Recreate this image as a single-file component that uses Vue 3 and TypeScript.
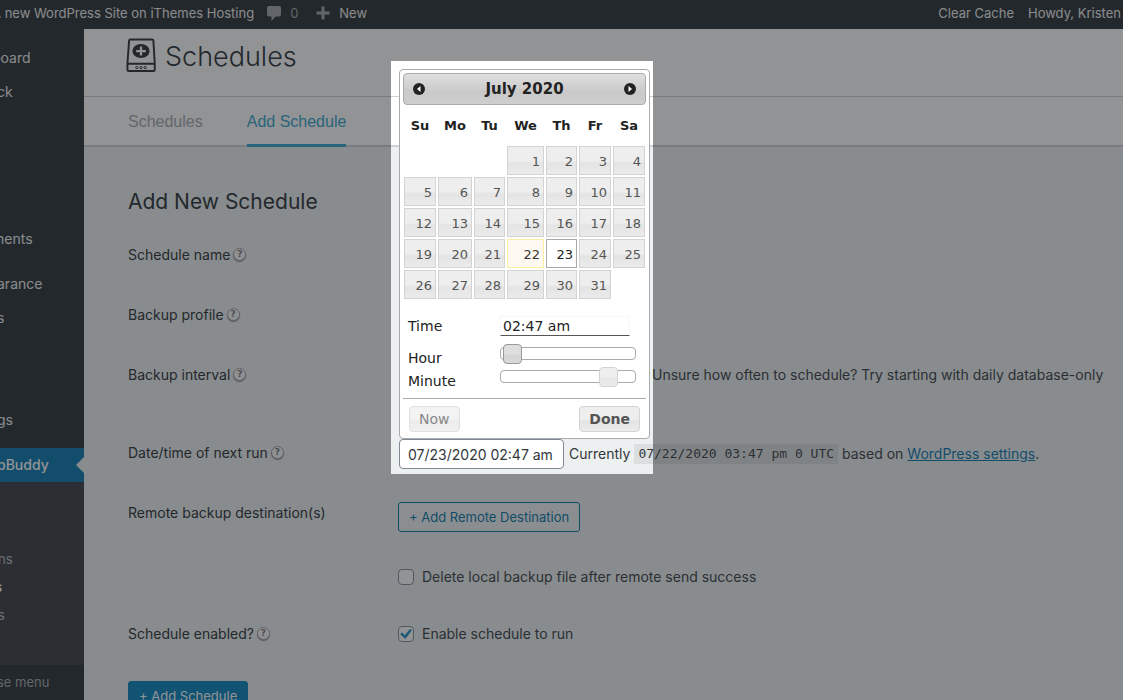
<script setup lang="ts">
import { ref } from 'vue'

interface MenuItem {
  label: string
  size: string
}

const menu: MenuItem[] = [
  { label: 'board', size: 'first clipped' },
  { label: 'ck', size: 'regular' },
  { label: 'ments', size: 'spaced clipped' },
  { label: 'arance', size: 'group' },
  { label: 's', size: 'regular' },
  { label: 'gs', size: 'last' },
]
const submenu = ['ns', 's', 's']
const dayNames = ['Su', 'Mo', 'Tu', 'We', 'Th', 'Fr', 'Sa']

const firstWeekday = 3
const daysInMonth = 31
const weeks: number[][] = []
for (let start = 1 - firstWeekday; start <= daysInMonth; start += 7) {
  weeks.push(Array.from({ length: 7 }, (_, i) => start + i))
}

const today = 22
const selected = ref(23)
const time = ref('02:47 am')
const hour = ref(2)
const minute = ref(47)
const nextRun = ref('07/23/2020 02:47 am')
const deleteLocal = ref(false)
const enabled = ref(true)
</script>

<template>
  <div class="page">
    <header class="adminbar">
      <a href="#" class="site">A new WordPress Site on iThemes Hosting</a>
      <a href="#" class="comments">
        <svg width="14" height="15" viewBox="0 0 14 15"><path d="M2 0h10a2 2 0 0 1 2 2v6.500a2 2 0 0 1-2 2H8.500L4.500 15v-4.500H2a2 2 0 0 1-2-2V2a2 2 0 0 1 2-2z" /></svg>
        <span>0</span>
      </a>
      <a href="#" class="new">
        <svg width="14" height="14" viewBox="0 0 14 14"><path d="M5.500 0.500h3v5h5v3h-5v5h-3v-5h-5v-3h5z" /></svg>
        <span>New</span>
      </a>
      <a href="#" class="cache">Clear Cache</a>
      <a href="#" class="howdy">Howdy, Kristen</a>
    </header>

    <div class="body">
      <nav class="sidebar">
        <a v-for="(item, i) in menu" :key="i" href="#" class="item" :class="item.size">{{ item.label }}</a>
        <a href="#" class="item current">pBuddy</a>
        <div class="submenu">
          <a v-for="(label, i) in submenu" :key="i" href="#" :class="{ here: i === 1 }">{{ label }}</a>
        </div>
        <button type="button" class="collapse">se menu</button>
      </nav>

      <main class="main">
        <div class="titlebar">
          <svg width="30" height="35" viewBox="0 0 31 36" fill="none">
            <path d="M4.500 1.500h22.500q1.200 0 1.300 1.200L29.700 26v6.500q0 1.600-1.600 1.600H3.100q-1.600 0-1.600-1.600V26L3.200 2.700q.1-1.200 1.300-1.200zM1.500 26.500h28.200" stroke="#23282d" stroke-width="2" />
            <ellipse cx="15.500" cy="13.400" rx="8.900" ry="7.300" fill="#23282d" />
            <path d="M15.500 8.800v9.200M10.500 13.400h10" stroke="#fff" stroke-width="2.400" />
            <g stroke="#23282d" stroke-width="1">
              <circle cx="11.200" cy="30.500" r="1.200" /><circle cx="15.500" cy="30.500" r="1.200" /><circle cx="19.800" cy="30.500" r="1.200" />
            </g>
          </svg>
          <h1>Schedules</h1>
        </div>
        <nav class="tabs">
          <a href="#">Schedules</a>
          <a href="#" class="active">Add Schedule</a>
        </nav>

        <form class="form" @submit.prevent>
          <h2>Add New Schedule</h2>
          <div class="row">
            <div class="label">Schedule name <span class="tip">?</span></div>
          </div>
          <div class="row">
            <div class="label">Backup profile <span class="tip">?</span></div>
          </div>
          <div class="row tall">
            <div class="label">Backup interval <span class="tip">?</span></div>
            <div class="hint">Unsure how often to schedule? Try starting with daily database-only</div>
          </div>
          <div class="row date">
            <label class="label" for="next-run">Date/time of next run <span class="tip">?</span></label>
            <div class="field">
              <input id="next-run" v-model="nextRun" type="text" class="next-run">
              <span class="currently">Currently</span>
              <code>07/22/2020 03:47 pm 0 UTC</code>
              <span>based on <a href="#">WordPress settings</a>.</span>

              <div class="spotlight">
                <section class="picker">
                  <div class="month">
                    <button type="button" aria-label="Prev">
                      <svg width="12" height="12" viewBox="0 0 12 12"><circle cx="6" cy="6" r="6" fill="#222" /><path d="M7.500 3v6L4 6z" fill="#fff" /></svg>
                    </button>
                    <strong>July 2020</strong>
                    <button type="button" aria-label="Next">
                      <svg width="12" height="12" viewBox="0 0 12 12"><circle cx="6" cy="6" r="6" fill="#222" /><path d="M4.500 3v6L8 6z" fill="#fff" /></svg>
                    </button>
                  </div>
                  <table>
                    <colgroup>
                      <col class="c34"><col class="c36"><col class="c33"><col class="c39"><col class="c33"><col class="c34"><col class="c34">
                    </colgroup>
                    <thead>
                      <tr><th v-for="d in dayNames" :key="d" scope="col">{{ d }}</th></tr>
                    </thead>
                    <tbody>
                      <tr v-for="(week, w) in weeks" :key="w">
                        <td v-for="d in week" :key="d">
                          <button
                            v-if="d > 0 && d <= daysInMonth"
                            type="button"
                            :class="{ today: d === today, selected: d === selected }"
                            @click="selected = d"
                          >{{ d }}</button>
                        </td>
                      </tr>
                    </tbody>
                  </table>
                  <div class="timing">
                    <label for="time">Time</label>
                    <input id="time" v-model="time" type="text" class="time">
                    <label for="hour">Hour</label>
                    <div class="track">
                      <input id="hour" v-model.number="hour" type="range" min="0" max="23" class="focused">
                    </div>
                    <label for="minute">Minute</label>
                    <div class="track">
                      <input id="minute" v-model.number="minute" type="range" min="0" max="59">
                    </div>
                  </div>
                  <div class="actions">
                    <button type="button" class="now">Now</button>
                    <button type="button" class="done">Done</button>
                  </div>
                </section>
              </div>
            </div>
          </div>
          <div class="row remote">
            <div class="label">Remote backup destination(s)</div>
            <div class="stack">
              <button type="button" class="secondary">+ Add Remote Destination</button>
              <label class="check"><input v-model="deleteLocal" type="checkbox">Delete local backup file after remote send success</label>
            </div>
          </div>
          <div class="row enable">
            <div class="label">Schedule enabled? <span class="tip">?</span></div>
            <label class="check"><input v-model="enabled" type="checkbox">Enable schedule to run</label>
          </div>
          <button type="submit" class="primary">+ Add Schedule</button>
        </form>
      </main>
    </div>
  </div>
</template>

<style>
body {
  margin: 0;
}
</style>

<style scoped>
.page {
  position: relative;
  display: flex;
  flex-direction: column;
  height: 100vh;
  overflow: hidden;
  background: #edf0f0;
  color: #32373c;
  font: 14px/20px Inter, "Liberation Sans", sans-serif;
}
.page * {
  box-sizing: border-box;
}
.page button,
.page input {
  font-family: inherit;
  margin: 0;
}
.adminbar {
  display: flex;
  align-items: center;
  flex: none;
  height: 29px;
  padding: 0 2px 3px 0;
  background: #23282c;
  font-size: 13px;
  white-space: nowrap;
}
.adminbar a {
  display: flex;
  align-items: center;
  gap: 9px;
  color: #eee;
  text-decoration: none;
}
.adminbar svg {
  fill: #a0a5aa;
}
.site {
  margin-left: -8px;
}
.adminbar .comments {
  margin-left: 13px;
  color: #a0a5aa;
}
.new {
  margin-left: 18px;
}
.cache {
  margin-left: auto;
}
.howdy {
  margin-left: 14px;
}
.body {
  display: flex;
  flex: 1;
  min-height: 0;
}
.sidebar {
  display: flex;
  flex-direction: column;
  flex: none;
  width: 84px;
  overflow: hidden;
  background: #23282c;
}
.item {
  flex: none;
  height: 34px;
  color: #eee;
  line-height: 34px;
  text-decoration: none;
  text-indent: -3px;
}
.clipped {
  text-indent: -8px;
}
.first {
  margin-top: 12px;
}
.spaced {
  margin-top: 113px;
}
.group {
  margin-top: 11px;
}
.last {
  margin: 68px 0 11px;
}
.current {
  display: flex;
  align-items: center;
  justify-content: space-between;
  background: #0073aa;
  color: #fff;
  font-weight: 500;
}
.current::after {
  content: "";
  border: 8px solid transparent;
  border-left: 0;
  border-right-color: #edf0f0;
}
.submenu {
  display: flex;
  flex-direction: column;
  flex: none;
  height: 183px;
  padding-top: 63px;
  background: #32373a;
  font-size: 13px;
}
.submenu a {
  height: 28px;
  color: #b4b9be;
  line-height: 28px;
  text-decoration: none;
  text-indent: -2px;
}
.submenu .here {
  color: #fff;
  font-weight: 600;
  text-indent: -5px;
}
.collapse {
  height: 34px;
  padding: 0;
  border: 0;
  background: none;
  color: #a0a5aa;
  font-size: 13px;
  text-align: left;
  text-indent: -3px;
}
.main {
  flex: 1;
  min-width: 0;
}
.titlebar {
  display: flex;
  align-items: flex-start;
  gap: 9px;
  height: 68px;
  padding: 9px 42px 0;
  border-bottom: 1px solid #ccd0d4;
  background: #fff;
}
h1 {
  margin: 0;
  color: #23282d;
  font: 300 27px/38px Inter, sans-serif;
}
.tabs {
  display: flex;
  gap: 44px;
  height: 50px;
  padding: 0 44px;
  border-bottom: 2px solid #ccd0d4;
  background: #fff;
  font: 16px/49px "Liberation Sans", Arial, sans-serif;
}
.tabs a {
  height: 50px;
  color: #a0a5aa;
  text-decoration: none;
}
.tabs .active {
  border-bottom: 3px solid #2ea2cc;
  color: #2ea2cc;
}
.form {
  padding: 38px 20px 0 44px;
}
h2 {
  margin: 0 0 26px;
  color: #23282d;
  font: 400 21px/34px Inter, sans-serif;
}
.row {
  display: flex;
  min-height: 60px;
  white-space: nowrap;
}
.label {
  display: flex;
  align-items: center;
  gap: 3px;
  flex: none;
  width: 270px;
  height: 20px;
  color: #23282d;
}
.tip {
  width: 13px;
  height: 13px;
  margin-bottom: 2px;
  border: 1px solid #a59ea0;
  border-radius: 50%;
  background: #fbf8f8;
  box-shadow: 0 1px 1px #8b8789;
  color: #777;
  font: bold 9px/11px "DejaVu Sans", sans-serif;
  text-align: center;
}
.tall {
  min-height: 78px;
}
.hint {
  padding-left: 254px;
}
.field {
  position: relative;
  display: flex;
  align-items: center;
  align-self: flex-start;
  gap: 4px;
  height: 20px;
  margin-top: 1px;
}
.page .next-run {
  width: 165px;
  height: 30px;
  margin: 0 1px;
  padding: 0 8px;
  border: 1px solid #7e8993;
  border-radius: 4px;
  background: #fff;
  color: #32373c;
  font-size: 14px;
}
code {
  padding: 1px 4px;
  background: rgba(0, 0, 0, 0.07);
  font: 13px/18px "DejaVu Sans Mono", monospace;
}
.field a {
  color: #0073aa;
}
.spotlight {
  position: absolute;
  z-index: 5;
  bottom: -10px;
  left: -7px;
  width: 262px;
  padding: 8px 3px 35px 8px;
  box-shadow: 0 0 0 200vmax rgba(35, 40, 44, 0.5);
  pointer-events: none;
}
.picker {
  padding: 3px;
  border: 1px solid #aaa;
  border-radius: 4px;
  background: #fff;
  color: #222;
  font-family: "DejaVu Sans", Verdana, sans-serif;
  pointer-events: auto;
}
.month {
  display: flex;
  align-items: center;
  justify-content: space-between;
  height: 32px;
  padding: 0 9px;
  border: 1px solid #aaa;
  border-radius: 4px;
  background: linear-gradient(#e0e0e0, #c9c9c9 60%, #cecece);
}
.month button {
  display: flex;
  padding: 0;
  border: 0;
  background: none;
}
.month strong {
  font-size: 15px;
}
table {
  width: 100%;
  table-layout: fixed;
  border-collapse: collapse;
  font-size: 13px;
}
.c33 { width: 33px; }
.c34 { width: 34px; }
.c36 { width: 36px; }
.c39 { width: 39px; }
th {
  height: 40px;
  padding: 2px 0 0;
  font-weight: bold;
}
td {
  height: 31px;
  padding: 1px;
}
td button {
  display: block;
  width: 100%;
  height: 29px;
  padding: 2px 3px 0;
  border: 1px solid #d3d3d3;
  background: linear-gradient(#eee 50%, #e4e4e4 60%, #ebebeb);
  color: #555;
  font-size: 13px;
  text-align: right;
}
.today {
  border-color: #fcefa1;
  background: #fdf9f0;
  color: #363636;
}
.selected {
  border-color: #aaa;
  background: #fff;
  color: #212121;
}
.timing {
  display: grid;
  grid-template-columns: 92px 136px;
  grid-template-rows: 20px 32px 23px;
  align-items: end;
  margin-top: 16px;
  padding: 0 5px 7px;
  font-size: 14px;
}
.time {
  width: 130px;
  height: 20px;
  padding: 0 2px;
  border: 1px dotted #f1f1f1;
  border-bottom: 1px solid #555;
  background: #fff;
  color: #222;
  font-size: 14px;
}
.track {
  height: 13px;
  margin-bottom: 8px;
  border: 1px solid #aaa;
  border-radius: 4px;
  background: #fff;
}
.page .track input {
  appearance: none;
  display: block;
  width: calc(100% + 20px);
  height: 11px;
  margin: 0 -10px;
  background: transparent;
}
.track input::-webkit-slider-thumb {
  appearance: none;
  width: 19px;
  height: 20px;
  border: 1px solid #d3d3d3;
  border-radius: 4px;
  background: linear-gradient(#eee 50%, #e6e6e6 60%, #ebebeb);
}
.track .focused::-webkit-slider-thumb {
  border-color: #999;
  background: linear-gradient(#dedede 50%, #d4d4d4 60%, #dadada);
}
.actions {
  display: flex;
  justify-content: space-between;
  padding: 7px 6px 3px;
  border-top: 1px solid #aaa;
}
.actions button {
  height: 26px;
  padding: 0 9px;
  border: 1px solid #d3d3d3;
  border-radius: 4px;
  background: linear-gradient(#eee 50%, #e4e4e4 60%, #ebebeb);
  color: #555;
  font-size: 14px;
}
.actions .now {
  opacity: 0.7;
}
.actions .done {
  font-weight: bold;
}
.stack {
  display: flex;
  flex-direction: column;
  align-items: flex-start;
  gap: 35px;
}
.secondary,
.primary {
  height: 30px;
  padding: 0 10px;
  border: 1px solid #0071a1;
  border-radius: 3px;
  background: #f3f5f6;
  color: #0071a1;
  font-size: 13px;
}
.primary {
  border-color: #007cba;
  background: #007cba;
  color: #fff;
}
.check {
  display: flex;
  align-items: center;
  gap: 8px;
  height: 20px;
}
.check input {
  appearance: none;
  display: grid;
  place-items: center;
  width: 16px;
  height: 16px;
  border: 1px solid #7e8993;
  border-radius: 4px;
  background: #fff;
}
.check input:checked::before {
  content: "";
  width: 12px;
  height: 10px;
  background: #1e8cbe;
  clip-path: polygon(0 50%, 18% 36%, 40% 62%, 82% 0, 100% 12%, 44% 100%);
}
.remote {
  min-height: 121px;
}
.remote .stack {
  margin-top: -1px;
}
.enable {
  min-height: 57px;
}
</style>
